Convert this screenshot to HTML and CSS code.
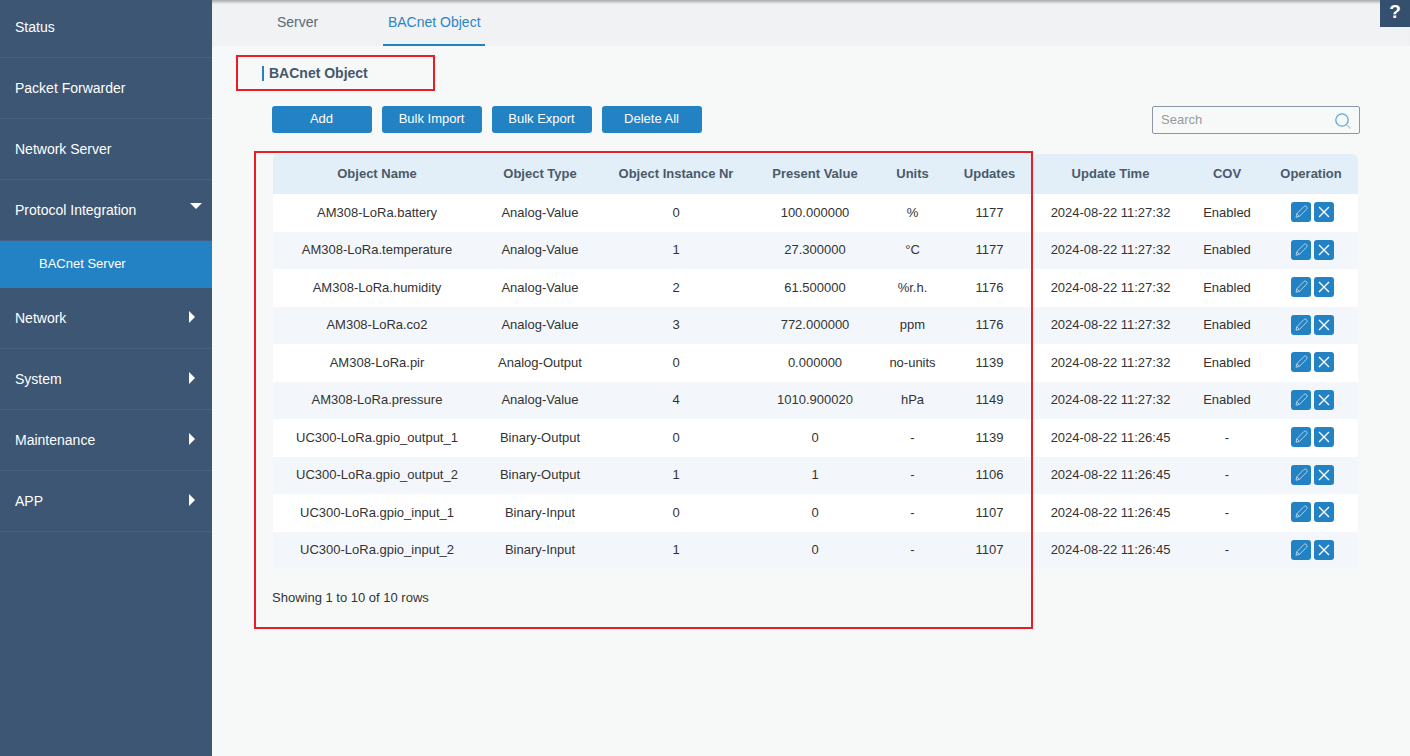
FILE: index.html
```html
<!DOCTYPE html>
<html lang="en">
<head>
<meta charset="utf-8">
<title>BACnet Object</title>
<link rel="stylesheet" href="styles.css">
</head>
<body>
<div class="app">
  <nav class="sidebar">
    <div class="nav-item">Status</div>
    <div class="nav-item">Packet Forwarder</div>
    <div class="nav-item">Network Server</div>
    <div class="nav-item">Protocol Integration<span class="arrow-down"></span></div>
    <div class="nav-sub">BACnet Server</div>
    <div class="nav-item">Network<span class="arrow-right"></span></div>
    <div class="nav-item">System<span class="arrow-right"></span></div>
    <div class="nav-item">Maintenance<span class="arrow-right"></span></div>
    <div class="nav-item">APP<span class="arrow-right"></span></div>
  </nav>
  <main class="main">
    <div class="tabs">
      <div class="tab">Server</div>
      <div class="tab tab-active">BACnet Object</div>
    </div>
    <div class="help">?</div>
    <h1 class="section-title">BACnet Object</h1>
    <div class="toolbar">
      <button class="btn">Add</button>
      <button class="btn">Bulk Import</button>
      <button class="btn">Bulk Export</button>
      <button class="btn">Delete All</button>
      <div class="search">
        <span class="search-text">Search</span>
        <svg class="search-icon" viewBox="0 0 18 18" width="18" height="18"><circle cx="8" cy="8" r="6.2" fill="none" stroke="#5ba9d6" stroke-width="1.3"/><path d="M12.6 12.6 L16.5 16.5" stroke="#9fd0e8" stroke-width="1.3" fill="none"/></svg>
      </div>
    </div>
    <table class="grid">
      <colgroup>
        <col class="c1"><col class="c2"><col class="c3"><col class="c4"><col class="c5"><col class="c6"><col class="c7"><col class="c8"><col class="c9">
      </colgroup>
      <thead>
        <tr><th>Object Name</th><th>Object Type</th><th>Object Instance Nr</th><th>Present Value</th><th>Units</th><th>Updates</th><th>Update Time</th><th>COV</th><th>Operation</th></tr>
      </thead>
      <tbody id="rows"></tbody>
    </table>
    <div class="summary">Showing 1 to 10 of 10 rows</div>
    <div class="mark mark-title"></div>
    <div class="mark mark-table"></div>
  </main>
</div>
<template id="ops">
  <div class="ops">
    <span class="op"><svg viewBox="0 0 20 20" width="20" height="20"><path d="M5 15.2 L5.8 11.8 L12.8 4.6 C13.6 3.8 14.9 3.9 15.6 4.7 C16.3 5.5 16.2 6.6 15.5 7.3 L8.4 14.4 Z M6 11.8 L8.3 14.2" fill="none" stroke="#c4d9e8" stroke-width="0.9"/></svg></span>
    <span class="op"><svg viewBox="0 0 20 20" width="20" height="20"><path d="M5 5 L15 15 M15 5 L5 15" fill="none" stroke="#fff" stroke-width="1.4"/></svg></span>
  </div>
</template>
<script src="app.js"></script>
</body>
</html>
```

FILE: app.js
```js
var data = [
  ["AM308-LoRa.battery","Analog-Value","0","100.000000","%","1177","2024-08-22 11:27:32","Enabled"],
  ["AM308-LoRa.temperature","Analog-Value","1","27.300000","°C","1177","2024-08-22 11:27:32","Enabled"],
  ["AM308-LoRa.humidity","Analog-Value","2","61.500000","%r.h.","1176","2024-08-22 11:27:32","Enabled"],
  ["AM308-LoRa.co2","Analog-Value","3","772.000000","ppm","1176","2024-08-22 11:27:32","Enabled"],
  ["AM308-LoRa.pir","Analog-Output","0","0.000000","no-units","1139","2024-08-22 11:27:32","Enabled"],
  ["AM308-LoRa.pressure","Analog-Value","4","1010.900020","hPa","1149","2024-08-22 11:27:32","Enabled"],
  ["UC300-LoRa.gpio_output_1","Binary-Output","0","0","-","1139","2024-08-22 11:26:45","-"],
  ["UC300-LoRa.gpio_output_2","Binary-Output","1","1","-","1106","2024-08-22 11:26:45","-"],
  ["UC300-LoRa.gpio_input_1","Binary-Input","0","0","-","1107","2024-08-22 11:26:45","-"],
  ["UC300-LoRa.gpio_input_2","Binary-Input","1","0","-","1107","2024-08-22 11:26:45","-"]
];
var body = document.getElementById("rows");
var tpl = document.getElementById("ops");
data.forEach(function (row) {
  var tr = document.createElement("tr");
  row.forEach(function (v) {
    var td = document.createElement("td");
    td.textContent = v;
    tr.appendChild(td);
  });
  var td = document.createElement("td");
  td.appendChild(tpl.content.cloneNode(true));
  tr.appendChild(td);
  body.appendChild(tr);
});
```

FILE: styles.css
```css
* { box-sizing: border-box; }
html, body { margin: 0; padding: 0; height: 100%; overflow: hidden; }
body { font-family: "Liberation Sans", Arial, sans-serif; background: #f7f9f9; color: #333; }
.app { display: flex; height: 756px; }

.sidebar { width: 212px; flex: none; background: #3c5673; color: #fff; overflow: hidden; }
.nav-item { height: 61px; padding-left: 15px; display: flex; align-items: center; font-size: 14px; border-bottom: 1px solid #456080; position: relative; }
.nav-item:first-child { height: 58px; padding-bottom: 4px; }
.nav-sub { height: 47px; padding: 0 0 2px 39px; display: flex; align-items: center; font-size: 13px; background: #2282c3; }
.arrow-down { position: absolute; right: 10px; top: 23px; width: 0; height: 0; border-left: 6px solid transparent; border-right: 6px solid transparent; border-top: 6px solid #fff; }
.arrow-right { position: absolute; right: 17px; top: 23px; width: 0; height: 0; border-top: 6px solid transparent; border-bottom: 6px solid transparent; border-left: 6px solid #fff; }

.main { flex: 1; position: relative; min-width: 0; }
.tabs { height: 46px; background: #f0f2f4; display: flex; padding-left: 60px; box-shadow: inset 0 4px 3px -2px #a8a8a8; }
.tab { font-size: 14px; color: #5a6a7a; height: 46px; line-height: 44px; padding: 0 5px; margin-right: 60px; }
.tab-active { color: #2f85c4; border-bottom: 2px solid #2282c3; width: 102px; padding: 0; text-align: center; white-space: nowrap; }
.help { position: absolute; right: 0; top: 0; width: 30px; height: 27px; background: #34506e; color: #fff; font-weight: 700; font-size: 19px; text-align: center; line-height: 24px; }

.section-title { margin: 20px 0 0 50px; height: 15px; border-left: 2px solid #2282c3; padding-left: 5px; font-size: 14px; font-weight: 700; line-height: 15px; color: #44586d; }

.toolbar { display: flex; align-items: flex-start; gap: 10px; margin: 25px 50px 0 60px; height: 28px; }
.btn { width: 100px; height: 27px; border: 0; border-radius: 3px; background: #2282c3; color: #fff; font: 13px "Liberation Sans", Arial, sans-serif; padding: 0 1px 3px 0; }
.search { margin-left: auto; width: 208px; height: 28px; border: 1px solid #8a97a5; border-radius: 2px; display: flex; align-items: center; justify-content: space-between; padding: 0 7px 0 8px; }
.search-text { font-size: 13px; color: #9a9a9a; padding-bottom: 2px; }
.search-icon { margin-top: 2px; }

.grid { margin: 20px 0 0 61px; width: 1085px; table-layout: fixed; border-collapse: separate; border-spacing: 0; font-size: 13px; }
.c1 { width: 208px; } .c2 { width: 118px; } .c3 { width: 154px; } .c4 { width: 124px; } .c5 { width: 71px; } .c6 { width: 83px; } .c7 { width: 159px; } .c8 { width: 74px; } .c9 { width: 94px; }
.grid th { height: 40px; background: #e2eff8; font-weight: 700; color: #4a5a6b; text-align: center; padding: 0 0 1px; }
.grid th:first-child { border-top-left-radius: 6px; }
.grid th:last-child { border-top-right-radius: 6px; }
.grid td { height: 37.5px; text-align: center; padding: 0 0 1px; color: #333; background: #fff; white-space: nowrap; }
.grid tbody tr:nth-child(even) td { background: #f3f7fb; }
.ops { display: flex; justify-content: center; gap: 3px; padding-left: 2px; }
.op { width: 20px; height: 20px; border-radius: 3px; background: #2282c3; display: block; }
.op svg { display: block; }

.summary { margin: 21px 0 0 60px; font-size: 13px; color: #333; }

.mark { position: absolute; border: 2px solid #ed1c24; pointer-events: none; }
.mark-title { left: 24px; top: 55px; width: 199px; height: 36px; }
.mark-table { left: 42px; top: 151px; width: 779px; height: 478px; }
```
